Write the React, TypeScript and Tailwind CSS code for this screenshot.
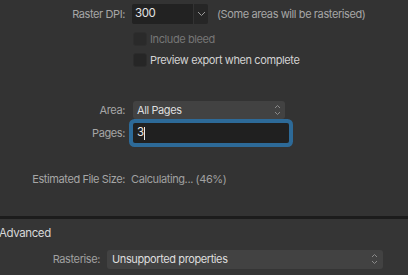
const Chevron = () => (
  <svg width="9" height="6" viewBox="0 0 9 6" fill="none" stroke="#9a9a9a" strokeWidth="1">
    <path d="M1 1l3.5 3.5L8 1" />
  </svg>
);

const UpDown = () => (
  <svg width="7" height="12" viewBox="0 0 7 12" fill="none" stroke="#8a8a8a" strokeWidth="1">
    <path d="M1 4l2.5-2.5L6 4" />
    <path d="M1 8l2.5 2.5L6 8" />
  </svg>
);

const Label = ({ children }: { children: React.ReactNode }) => (
  <div className="w-[125px] shrink-0 text-right text-[#a6a6a6]">{children}</div>
);

export default function App() {
  return (
    <div
      className="w-[408px] h-[275px] overflow-hidden bg-[#333333] text-[11px] leading-none tracking-[-0.4px]"
      style={{ fontFamily: "Inter, 'Noto Sans', sans-serif" }}
    >
      {/* Raster DPI */}
      <div className="flex items-center h-[20px] mt-[4px]">
        <Label>Raster DPI:</Label>
        <div className="ml-[7px] flex h-[20px] gap-px">
          <div className="w-[61px] bg-[#222222] rounded-l-[2px] flex items-center pl-[3px] text-[#e4e4e4] text-[11.5px]">300</div>
          <div className="w-[14px] bg-[#262626] rounded-r-[2px] flex items-center justify-center">
            <Chevron />
          </div>
        </div>
        <div className="ml-[9px] text-[#a6a6a6]">(Some areas will be rasterised)</div>
      </div>

      {/* checkboxes */}
      <div className="ml-[133px] mt-[8px] flex items-center gap-[3px] h-[14px]">
        <div className="w-[14px] h-[14px] rounded-[3px] bg-[#2a2a2a] border border-[#2e2e2e]" />
        <span className="text-[#767676]">Include bleed</span>
      </div>
      <div className="ml-[133px] mt-[7px] flex items-center gap-[3px] h-[14px]">
        <div className="w-[14px] h-[14px] rounded-[3px] bg-[#262626] border border-[#2c2c2c]" />
        <span className="text-[#d2d2d2]">Preview export when complete</span>
      </div>

      {/* Area */}
      <div className="flex items-center h-[18px] mt-[34px]">
        <Label>Area:</Label>
        <div className="ml-[8px] w-[152px] h-[18px] bg-[#424242] rounded-[3px] flex items-center justify-between pl-[4px] pr-[4px] text-[#dedede]">
          <span>All Pages</span>
          <UpDown />
        </div>
      </div>

      {/* Pages */}
      <div className="flex items-center h-[20px] mt-[4px]">
        <Label>Pages:</Label>
        <div className="ml-[8px] w-[156px] h-[20px] bg-[#202020] rounded-[2px] ring-4 ring-[#2d6a98] flex items-center pl-[4px] text-[#e8e8e8] text-[11.5px]">
          <span>3</span>
          <span className="w-px h-[13px] bg-[#e8e8e8]" />
        </div>
      </div>

      {/* Estimated */}
      <div className="flex items-center h-[12px] mt-[30px] text-[#a0a0a0]">
        <Label>Estimated File Size:</Label>
        <span className="ml-[6px]">Calculating... (46%)</span>
      </div>

      {/* separator */}
      <div className="mt-[31px] h-[3px] bg-[#1c1c1c]" />

      {/* Advanced */}
      <div className="bg-[#353535] h-[56px]">
        <div className="pt-[9px] ml-[-1px] text-[11.5px] text-[#d8d8d8]">Advanced</div>
        <div className="flex items-center mt-[10px] h-[19px]">
          <div className="w-[100px] shrink-0 text-right text-[#a0a0a0]">Rasterise:</div>
          <div className="ml-[7px] w-[276px] h-[19px] bg-[#424242] rounded-[3px] flex items-center justify-between pl-[5px] pr-[5px] text-[#dedede]">
            <span>Unsupported properties</span>
            <UpDown />
          </div>
        </div>
      </div>
    </div>
  );
}
